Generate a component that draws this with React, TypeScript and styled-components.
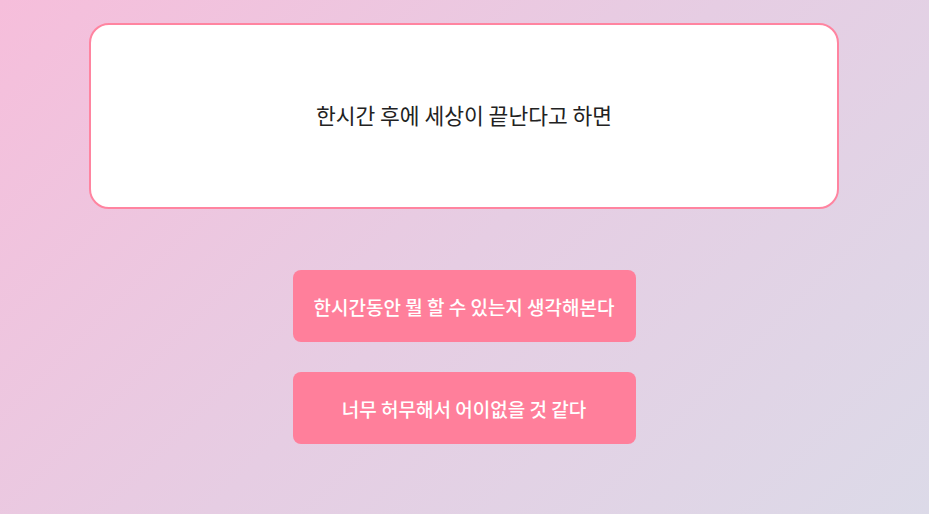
import styled, { createGlobalStyle } from 'styled-components';
import React from 'react';

const GlobalStyle = createGlobalStyle`
  html, body {
    margin: 0;
    padding: 0;
    height: 100%;
  }

  body {
    font-family: "Noto Sans CJK KR", "Noto Sans", sans-serif;
    background: linear-gradient(135deg, #f6bedb 0%, #e6cde3 50%, #dcdae8 100%);
    min-height: 514px;
    padding-right: 1px;
  }
`;

const choices = [
    '한시간동안 뭘 할 수 있는지 생각해본다',
    '너무 허무해서 어이없을 것 같다',
];

const App = () => {

    return (
        <>
            <GlobalStyle/>
            <Page>
                <QuestionCard>
                    <QuestionText>한시간 후에 세상이 끝난다고 하면</QuestionText>
                </QuestionCard>

                <Choices>
                    {choices.map(text => (
                        <ChoiceBtn key={text} type="button">{text}</ChoiceBtn>
                    ))}
                </Choices>
            </Page>
        </>
    );
}


export default App;

const ChoiceBtn = styled.button`
  width: 343px;
  height: 72px;
  border: none;
  border-radius: 8px;
  background-color: #ff7f9b;
  color: #fff;
  font-family: "Noto Sans CJK KR", "Noto Sans", sans-serif;
  font-size: 19px;
  font-weight: 500;
  cursor: pointer;

  :hover {
    background-color: #ff6d8c;
  }
`;

const Choices = styled.div`
  display: flex;
  flex-direction: column;
  align-items: center;
  gap: 30px;
  margin-top: 61px;
`;

const QuestionText = styled.p`
  margin: 0 0 4px;
  font-size: 21.5px;
  color: #222;
`;

const QuestionCard = styled.div`
  height: 186px;
  box-sizing: border-box;
  display: flex;
  align-items: center;
  justify-content: center;
  background-color: #fff;
  border: 2px solid #ff84a0;
  border-radius: 20px;
`;

const Page = styled.div`
  width: 750px;
  margin: 0 auto;
  padding-top: 23px;
`;
